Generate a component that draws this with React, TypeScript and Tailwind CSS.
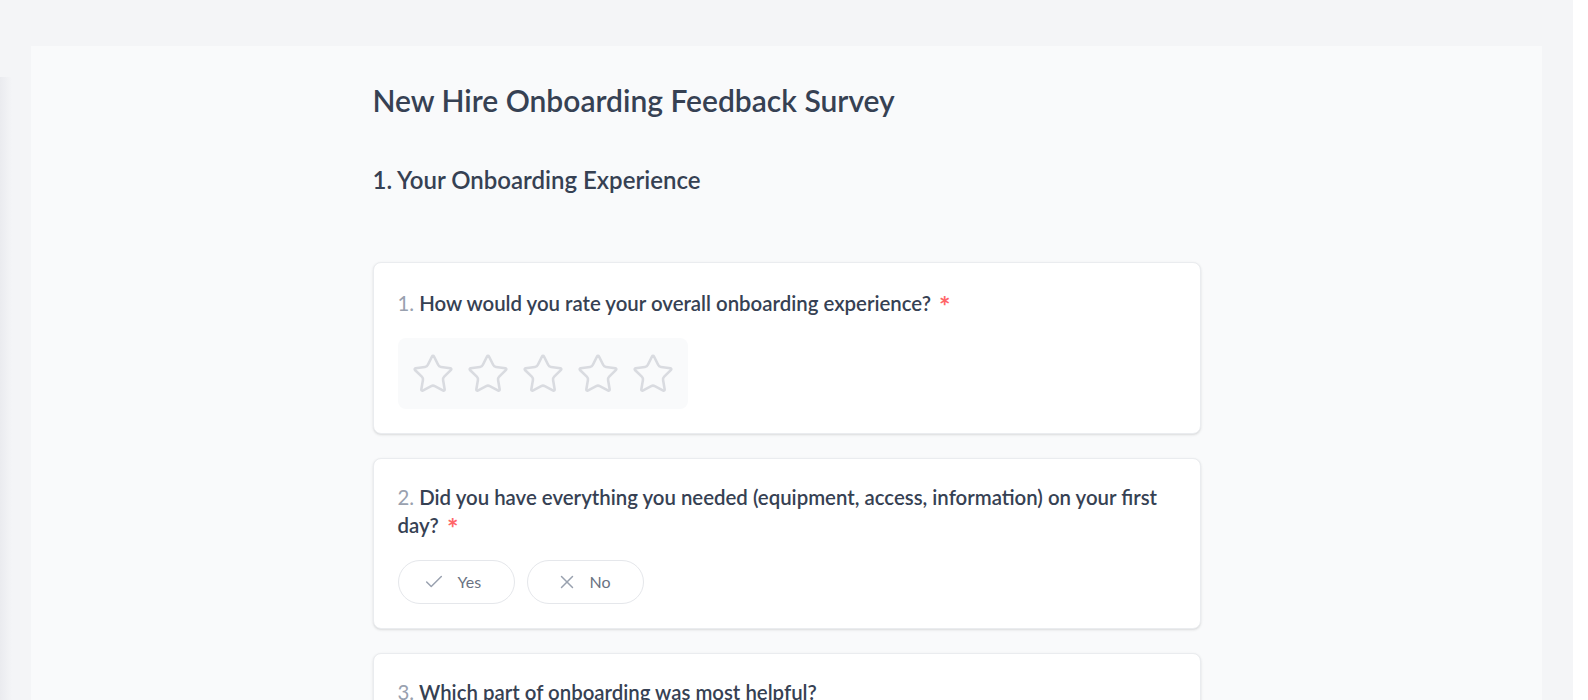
import { Star, Check, X } from 'lucide-react';

const font = { fontFamily: 'Lato, "Noto Sans", sans-serif' };

function Question({ num, text, required }: { num: number; text: string; required?: boolean }) {
  return (
    <div className="text-[20.4px] leading-7 font-semibold text-gray-700">
      <span className="text-gray-400 font-normal">{num}.</span> {text}
      {required && (
        <span className="relative top-[3px] ml-2 inline-block align-top text-[27px] leading-7 font-bold text-red-400">
          *
        </span>
      )}
    </div>
  );
}

function StarRating() {
  return (
    <div className="inline-flex h-[71px] items-center gap-[11px] rounded-lg bg-gray-50 px-[13px]">
      {[1, 2, 3, 4, 5].map((n) => (
        <Star key={n} size={44} strokeWidth={1.4} className="text-[#d9dbe0]" />
      ))}
    </div>
  );
}

function ChoiceButton({ label, icon }: { label: string; icon: 'yes' | 'no' }) {
  return (
    <button
      className={`flex h-11 w-[117px] items-center rounded-full border border-gray-200 bg-white text-[16px] text-gray-500 ${
        icon === 'yes' ? 'gap-[13px] pl-[24px]' : 'gap-[12px] pl-[28px]'
      }`}
    >
      {icon === 'yes' ? (
        <Check size={22} strokeWidth={1.6} className="text-gray-400" />
      ) : (
        <X size={22} strokeWidth={1.6} className="text-gray-400" />
      )}
      <span>{label}</span>
    </button>
  );
}

export default function App() {
  return (
    <div className="flex h-[700px] w-full overflow-hidden bg-[#f4f5f7]" style={font}>
      {/* left margin with faint sidebar shadow */}
      <div className="w-[31px] shrink-0">
        <div className="mt-[77px] h-full w-[12px] bg-linear-to-r from-[#eaebef] to-transparent" />
      </div>

      <div className="flex-1 pt-[46px]">
        <div className="h-full bg-gray-50">
          <div className="mx-auto max-w-[828px] pt-[36px]">
            <h1 className="text-[30px] leading-9 font-semibold text-gray-700">
              New Hire Onboarding Feedback Survey
            </h1>
            <h2 className="mt-[46px] text-[24px] leading-8 font-semibold text-gray-700">
              1. Your Onboarding Experience
            </h2>

            <div className="mt-[66px] flex flex-col gap-6">
              <div className="rounded-lg border border-[#eaecef] bg-white px-6 pt-[26px] pb-6 shadow-sm">
                <Question num={1} text="How would you rate your overall onboarding experience?" required />
                <div className="mt-[21px]">
                  <StarRating />
                </div>
              </div>

              <div className="rounded-lg border border-[#eaecef] bg-white p-6 shadow-sm">
                <Question
                  num={2}
                  text="Did you have everything you needed (equipment, access, information) on your first day?"
                  required
                />
                <div className="mt-[21px] flex gap-3">
                  <ChoiceButton label="Yes" icon="yes" />
                  <ChoiceButton label="No" icon="no" />
                </div>
              </div>

              <div className="rounded-lg border border-[#eaecef] bg-white p-6 shadow-sm">
                <Question num={3} text="Which part of onboarding was most helpful?" />
                <div className="h-32" />
              </div>
            </div>
          </div>
        </div>
      </div>

      <div className="w-[31px] shrink-0" />
      {/* scrollbar gutter */}
      <div className="w-[15px] shrink-0 bg-white" />
    </div>
  );
}
